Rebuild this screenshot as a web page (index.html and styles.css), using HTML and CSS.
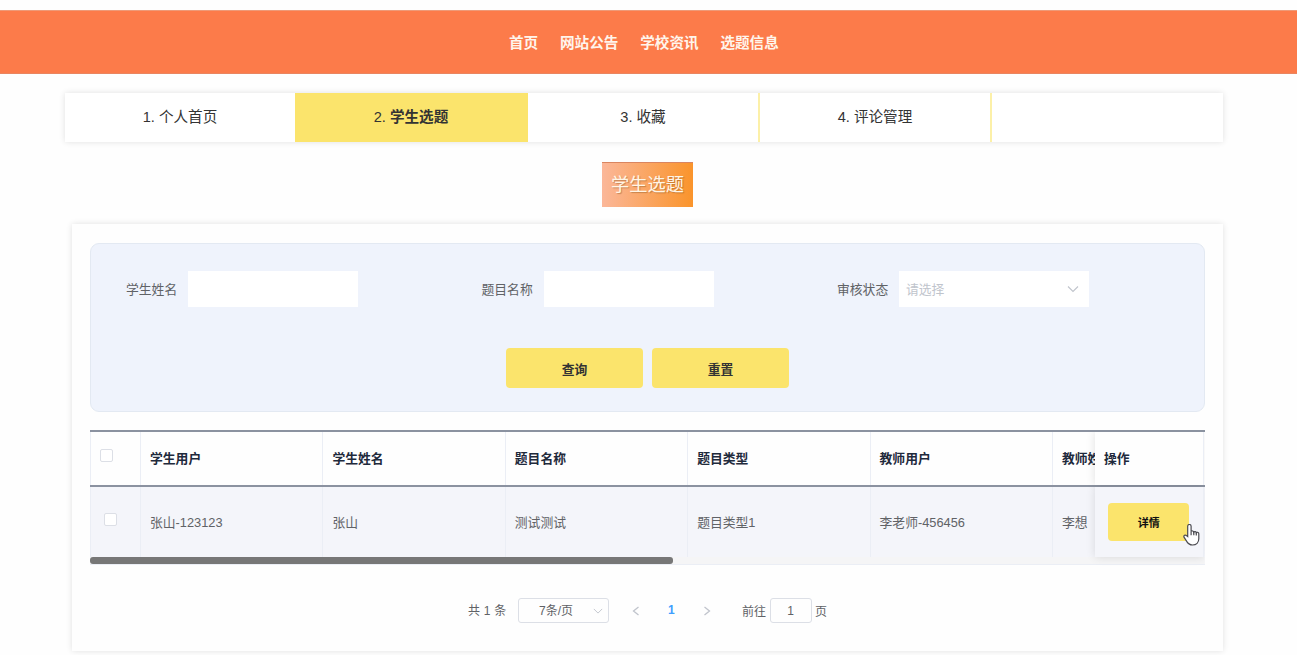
FILE: index.html
```html
<!DOCTYPE html>
<html lang="zh-CN">
  <head>
    <meta charset="UTF-8">
    <meta name="viewport" content="width=device-width, initial-scale=1" />
    <title>学生选题</title>
    <link rel="stylesheet" href="styles.css">
  </head>
  <body>
    <header class="header">
      <nav class="nav">
        <a>首页</a>
        <a>网站公告</a>
        <a>学校资讯</a>
        <a>选题信息</a>
      </nav>
    </header>

    <div class="tabs">
      <div class="tab">1. 个人首页</div>
      <div class="tab active">2. <b>学生选题</b></div>
      <div class="tab">3. 收藏</div>
      <div class="tab">4. 评论管理</div>
    </div>

    <h2 class="title">学生选题</h2>

    <main class="card">
      <form class="search">
        <div class="fields">
          <div class="field"><label>学生姓名</label><input class="input" type="text"></div>
          <div class="field"><label>题目名称</label><input class="input" type="text"></div>
          <div class="field">
            <label>审核状态</label>
            <div class="select">
              <span>请选择</span>
              <svg class="arrow" viewBox="0 0 12 12"><path d="M1 3.500l5 5 5-5"/></svg>
            </div>
          </div>
        </div>
        <div class="buttons">
          <button class="btn" type="button">查询</button>
          <button class="btn" type="button">重置</button>
        </div>
      </form>

      <div class="table">
        <div class="row head">
          <div class="cell check"><i class="box"></i></div>
          <div class="cell">学生用户</div>
          <div class="cell">学生姓名</div>
          <div class="cell">题目名称</div>
          <div class="cell">题目类型</div>
          <div class="cell">教师用户</div>
          <div class="cell cut">教师姓名</div>
          <div class="cell fixed">操作</div>
        </div>
        <div class="row body">
          <div class="cell check"><i class="box"></i></div>
          <div class="cell">张山-123123</div>
          <div class="cell">张山</div>
          <div class="cell">测试测试</div>
          <div class="cell">题目类型1</div>
          <div class="cell">李老师-456456</div>
          <div class="cell cut">李想</div>
          <div class="cell fixed">
            <button class="btn small" type="button">详情</button>
            <svg class="cursor" viewBox="0 0 17 22"><path d="M4.700 12.500V2.200a1.700 1.700 0 0 1 3.400 0V7.600c.4-1 2.600-.8 2.700.5.500-.9 2.400-.6 2.500.6.600-.8 2.500-.5 2.500 1v5.100c0 3.600-2.500 6.200-6.300 6.200-3.200 0-4.700-1.500-6.100-4.100L1 13.200c-.7-1.900 1.300-2.700 2.400-1.700z"/><path d="M8.100 7.600v3.600M10.800 8.100v3.200M13.300 8.700v2.800"/></svg>
          </div>
        </div>
        <div class="scroll"><div class="thumb"></div></div>
      </div>

      <div class="pager">
        <span class="total">共 1 条</span>
        <div class="sizes">
          <span>7条/页</span>
          <svg class="arrow" viewBox="0 0 12 12"><path d="M1 3.500l5 5 5-5"/></svg>
        </div>
        <svg class="page-btn" viewBox="0 0 12 12"><path d="M8.500 2L3.500 6l5 4"/></svg>
        <span class="current">1</span>
        <svg class="page-btn" viewBox="0 0 12 12"><path d="M3.500 2L8.500 6l-5 4"/></svg>
        <span class="jump">前往<span class="jump-num">1</span>页</span>
      </div>
    </main>
  </body>
</html>
```
FILE: styles.css
```css
* { box-sizing: border-box; }
body {
  margin: 0;
  padding-top: 10px;
  height: 655px;
  overflow: hidden;
  background: #fefefe;
  color: #606266;
  font-family: "Liberation Sans", "Noto Sans CJK SC", sans-serif;
  font-size: 12.8px;
}
.header {
  height: 64px;
  background: #fc7b4a;
  border-top: 1px solid #ee9a78;
  border-bottom: 1px solid #e98560;
}
.nav {
  display: flex;
  gap: 21.8px;
  height: 100%;
  padding: 0 0 1px 509px;
  align-items: center;
  color: #fff5ec;
  font-size: 14.6px;
  font-weight: bold;
}
.tabs {
  display: flex;
  width: 1158.500px;
  height: 49px;
  margin: 19px 0 0 64.500px;
  background: #fff;
  box-shadow: 0 0 6px rgba(0, 0, 0, 0.12);
}
.tab {
  width: 232px;
  padding-left: 1px;
  border-right: 2px solid #fcf0a8;
  line-height: 49px;
  text-align: center;
  color: #333;
  font-size: 14.6px;
}
.tab.active {
  background: #fbe46c;
  border-color: #fbe46c;
}
.tab:first-child {
  width: 231px;
  border-right-width: 1px;
  border-color: #fbe46c;
}
.title {
  width: 91px;
  height: 45px;
  margin: 19.500px 0 0 602px;
  border-top: 1px solid #d98560;
  background: linear-gradient(90deg, #fbb799, #fa942b);
  color: #fff5e6;
  font-size: 18.250px;
  font-weight: normal;
  line-height: 43px;
  text-align: center;
  text-shadow: 1px 1px 1px rgba(120, 70, 20, 0.4);
}
.card {
  width: 1151px;
  height: 427px;
  margin: 17.500px 0 0 72px;
  padding: 18.500px 18px 0;
  background: #fefefe;
  box-shadow: 0 0 6px rgba(0, 0, 0, 0.12);
}
.search {
  height: 169.500px;
  padding: 27.500px 0 0 35px;
  background: #eff3fc;
  border: 1px solid #e3e9f2;
  border-radius: 9px;
}
.fields {
  display: grid;
  grid-template-columns: repeat(3, 355.500px);
}
.field {
  display: flex;
  align-items: center;
}
.field label {
  width: 62px;
  padding-bottom: 2px;
}
.input, .select {
  width: 170px;
  height: 36px;
  border: 0;
  background: #fff;
}
.select {
  display: flex;
  width: 190px;
  padding: 0 10px 0 7px;
  align-items: center;
  justify-content: space-between;
  color: #c0c4cc;
}
.select span { padding-bottom: 2px; }
.arrow {
  width: 12px;
  height: 12px;
  fill: none;
  stroke: #c0c4cc;
  stroke-width: 1.100;
}
.buttons {
  display: flex;
  gap: 9px;
  margin: 41px 0 0 380px;
}
.btn {
  width: 137px;
  height: 40px;
  padding: 0;
  border: 0;
  border-radius: 4px;
  background: #fbe46c;
  color: #333;
  font-family: inherit;
  font-size: 12.800px;
  font-weight: bold;
}
.table {
  width: 1114.500px;
  margin-top: 18px;
}
.row {
  display: grid;
  grid-template-columns: 51px repeat(5, 182.400px) 42px 109.500px;
}
.cell {
  display: flex;
  align-items: center;
  padding: 0 0 2px 9px;
  border-right: 1px solid #ebeef5;
  white-space: nowrap;
}
.cell:first-child { border-left: 1px solid #ebeef5; }
.head {
  height: 57px;
  border-top: 2px solid #8b92a0;
  border-bottom: 2px solid #8b92a0;
  color: #1f2a3c;
  font-weight: bold;
}
.body {
  height: 70px;
  background: #f4f5fa;
}
.cut {
  overflow: hidden;
  border-right: 0;
}
.fixed {
  position: relative;
  background: #fefefe;
  box-shadow: 0 0 9px rgba(0, 0, 0, 0.12);
  clip-path: inset(0 0 -10px -10px);
}
.body .fixed {
  padding: 0 0 0 13.500px;
  background: #f4f5fa;
}
.box {
  width: 13px;
  height: 13px;
  margin-top: -4px;
  border: 1px solid #dcdfe6;
  border-radius: 2px;
  background: #fff;
}
.body .check { padding-left: 13px; }
.small {
  width: 80.500px;
  height: 38.500px;
  color: #111;
  font-size: 11px;
}
/* pointer over the detail button */
.cursor {
  position: absolute;
  left: 88px;
  top: 37px;
  width: 17px;
  height: 22px;
  fill: #fff;
  stroke: #4a4a50;
  stroke-width: 1.200;
}
.scroll {
  height: 8px;
  background: #f5f5f6;
  border-bottom: 1px solid #ebeef5;
}
.thumb {
  width: 583px;
  height: 7px;
  border-radius: 3px;
  background: #777;
}
.pager {
  display: flex;
  height: 25px;
  margin: 33px 0 0 378px;
  align-items: center;
  font-size: 12px;
}
.total {
  width: 50px;
  padding-bottom: 2px;
  word-spacing: 0.500px;
}
.sizes {
  display: flex;
  width: 91px;
  height: 25px;
  padding: 0 5px 0 20px;
  align-items: center;
  justify-content: space-between;
  border: 1px solid #dcdfe6;
  border-radius: 3px;
}
.sizes span { padding-bottom: 2px; }
.sizes .arrow {
  width: 10px;
  height: 10px;
}
.page-btn {
  width: 12px;
  height: 12px;
  margin-left: 21px;
  fill: none;
  stroke: #c0c4cc;
  stroke-width: 1.300;
}
.current {
  width: 38px;
  padding: 0 0 2px 26px;
  color: #409eff;
  font-weight: bold;
}
.jump {
  display: flex;
  align-items: center;
  margin-left: 29px;
}
.jump-num {
  width: 42px;
  height: 25px;
  margin: 0 3.500px;
  border: 1px solid #dcdfe6;
  border-radius: 3px;
  line-height: 24px;
  text-align: center;
}
```
